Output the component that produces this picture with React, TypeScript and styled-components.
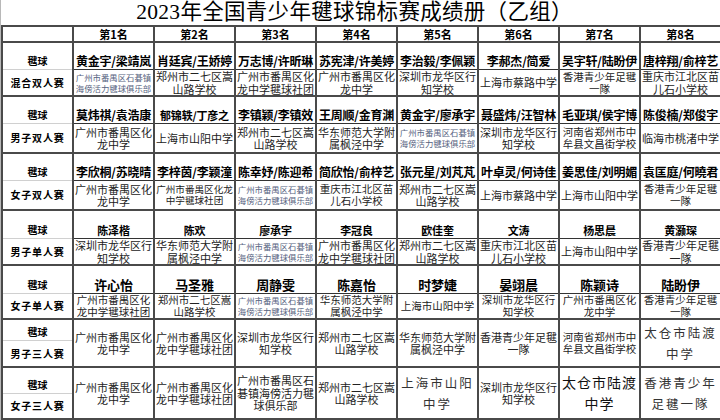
import React from "react";
import styled, { createGlobalStyle } from "styled-components";

const Global = createGlobalStyle`
  html, body { margin: 0; padding: 0; background: #fff; }
  body { font-family: "Noto Sans CJK SC", "Noto Sans", sans-serif; color: #000; }
`;

const Page = styled.div`
  width: 720px;
  height: 420px;
  overflow: hidden;
  box-sizing: border-box;
  border-left: 1px solid #b8b8b8;
`;

const Title = styled.h1`
  margin: 0;
  height: 25px;
  line-height: 25px;
  padding-right: 12px;
  text-align: center;
  font-family: "Liberation Serif", "Noto Sans CJK SC", serif;
  font-weight: 400;
  font-size: 21.5px;
  letter-spacing: 0.3px;
  color: #000;
`;

const Table = styled.div`
  display: grid;
  grid-template-columns: 71px repeat(8, 81px);
  border-top: 2px solid #4a4a4a;
  border-left: 2px solid #4a4a4a;
  width: 720px;
  box-sizing: border-box;
`;

const Cell = styled.div<{ $h: number }>`
  height: ${(p) => p.$h}px;
  box-sizing: border-box;
  border-right: 2px solid #4a4a4a;
  border-bottom: 2px solid #4a4a4a;
  display: flex;
  flex-direction: column;
  overflow: hidden;
`;

const HeadCell = styled(Cell)`
  align-items: center;
  justify-content: center;
  font-weight: 700;
  font-size: 11px;
  line-height: 12px;
`;

const LabelTop = styled.div<{ $h: number }>`
  height: ${(p) => p.$h}px;
  box-sizing: border-box;
  border-bottom: 1px solid #d0d0d0;
  display: flex;
  align-items: flex-end;
  justify-content: center;
  padding-bottom: 2px;
  font-weight: 700;
  font-size: 10px;
  line-height: 12px;
`;

const LabelBottom = styled.div`
  flex: 1;
  display: flex;
  align-items: center;
  justify-content: center;
  font-weight: 700;
  font-size: 10px;
  letter-spacing: 0.8px;
  line-height: 12px;
`;

const NamePart = styled.div<{ $h: number; $size: number }>`
  height: ${(p) => p.$h}px;
  flex: none;
  box-sizing: border-box;
  border-bottom: 1px solid #333;
  display: flex;
  align-items: flex-end;
  justify-content: center;
  padding-bottom: 1px;
  font-weight: 700;
  font-size: ${(p) => p.$size}px;
  line-height: ${(p) => p.$size + 2}px;
  white-space: nowrap;
  letter-spacing: -0.2px;
`;

type Size = "tiny" | "xs" | "sm" | "md" | "lg" | "xl";

const sizes: Record<Size, { fs: number; lh: number; ls: number; color: string }> = {
  tiny: { fs: 8.4, lh: 11, ls: 0, color: "#56627e" },
  xs: { fs: 9.6, lh: 11.5, ls: 0, color: "#222" },
  sm: { fs: 10.5, lh: 11.8, ls: 0, color: "#222" },
  md: { fs: 11, lh: 12.5, ls: 0, color: "#222" },
  lg: { fs: 12.5, lh: 21, ls: 2, color: "#333" },
  xl: { fs: 14, lh: 21, ls: 1, color: "#111" },
};

const SchoolPart = styled.div<{ $size: Size }>`
  flex: 1;
  min-height: 0;
  display: flex;
  align-items: center;
  justify-content: center;
  text-align: center;
  padding: 0 1px;
  font-size: ${(p) => sizes[p.$size].fs}px;
  line-height: ${(p) => sizes[p.$size].lh}px;
  letter-spacing: ${(p) => sizes[p.$size].ls}px;
  color: ${(p) => sizes[p.$size].color};
`;

type Entry = { name?: string; school: string; size?: Size; nameSize?: number };
type Row = { event: string; h: number; nameH: number; split: number; nameSize: number; entries: Entry[] };

const TINY = "广州市番禺区石碁镇海傍活力毽球俱乐部";

const rows: Row[] = [
  {
    event: "混合双人赛", h: 54, nameH: 27, split: 27, nameSize: 12,
    entries: [
      { name: "黄金宇/梁靖岚", school: TINY, size: "tiny" },
      { name: "肖廷宾/王娇婷", school: "郑州市二七区嵩山路学校" },
      { name: "万志博/许昕琳", school: "广州市番禺区化龙中学毽球社团" },
      { name: "苏宪津/许美婷", school: "广州市番禺区化龙中学" },
      { name: "李治毅/李佩颖", school: "深圳市龙华区行知学校" },
      { name: "李郝杰/简爱", school: "上海市蔡路中学" },
      { name: "吴宇轩/陆盼伊", school: "香港青少年足毽一隊", size: "sm" },
      { name: "唐梓翔/俞梓艺", school: "重庆市江北区苗儿石小学校" },
    ],
  },
  {
    event: "男子双人赛", h: 57, nameH: 27, split: 27, nameSize: 12,
    entries: [
      { name: "莫炜祺/袁浩康", school: "广州市番禺区化龙中学" },
      { name: "郁锦轶/丁彦之", school: "上海市山阳中学", nameSize: 11 },
      { name: "李镇颖/李镇效", school: "郑州市二七区嵩山路学校" },
      { name: "王周顺/金育渊", school: "华东师范大学附属枫泾中学" },
      { name: "黄金宇/廖承宇", school: TINY, size: "tiny" },
      { name: "聂盛炜/汪智林", school: "深圳市龙华区行知学校" },
      { name: "毛亚琪/侯宇博", school: "河南省郑州市中牟县文昌街学校", size: "sm" },
      { name: "陈俊楠/郑俊宇", school: "临海市桃渚中学" },
    ],
  },
  {
    event: "女子双人赛", h: 57, nameH: 27, split: 27, nameSize: 12,
    entries: [
      { name: "李欣桐/苏晓晴", school: "广州市番禺区化龙中学" },
      { name: "李梓茵/李颖潼", school: "广州市番禺区化龙中学毽球社团", size: "xs" },
      { name: "陈幸妤/陈迎希", school: TINY, size: "tiny" },
      { name: "简欣怡/俞梓艺", school: "重庆市江北区苗儿石小学校", size: "sm" },
      { name: "张元星/刘芃芃", school: "郑州市二七区嵩山路学校" },
      { name: "叶卓灵/何诗佳", school: "上海市蔡路中学" },
      { name: "姜思佳/刘明媚", school: "上海市山阳中学" },
      { name: "袁匡庭/何曉君", school: "香港青少年足毽一隊", size: "sm" },
    ],
  },
  {
    event: "男子单人赛", h: 55, nameH: 28, split: 28, nameSize: 11,
    entries: [
      { name: "陈泽楷", school: "深圳市龙华区行知学校" },
      { name: "陈欢", school: "华东师范大学附属枫泾中学" },
      { name: "廖承宇", school: TINY, size: "tiny" },
      { name: "李冠良", school: "广州市番禺区化龙中学毽球社团" },
      { name: "欧佳奎", school: "郑州市二七区嵩山路学校" },
      { name: "文涛", school: "重庆市江北区苗儿石小学校" },
      { name: "杨思晨", school: "上海市山阳中学" },
      { name: "黄灏琛", school: "香港青少年足毽一隊" },
    ],
  },
  {
    event: "女子单人赛", h: 54, nameH: 28, split: 28, nameSize: 13,
    entries: [
      { name: "许心怡", school: "广州市番禺区化龙中学毽球社团", size: "sm" },
      { name: "马圣雅", school: "郑州市二七区嵩山路学校", size: "sm" },
      { name: "周静雯", school: TINY, size: "tiny" },
      { name: "陈嘉怡", school: "华东师范大学附属枫泾中学", size: "sm" },
      { name: "时梦婕", school: "上海市山阳中学", size: "sm" },
      { name: "晏翊晨", school: "深圳市龙华区行知学校", size: "sm" },
      { name: "陈颖诗", school: "广州市番禺区化龙中学", size: "sm" },
      { name: "陆盼伊", school: "香港青少年足毽一隊", size: "sm" },
    ],
  },
  {
    event: "男子三人赛", h: 48, nameH: 0, split: 21, nameSize: 12,
    entries: [
      { school: "广州市番禺区化龙中学" },
      { school: "广州市番禺区化龙中学毽球社团" },
      { school: "深圳市龙华区行知学校" },
      { school: "郑州市二七区嵩山路学校" },
      { school: "华东师范大学附属枫泾中学" },
      { school: "香港青少年足毽一隊" },
      { school: "河南省郑州市中牟县文昌街学校", size: "sm" },
      { school: "太仓市陆渡中学", size: "lg" },
    ],
  },
  {
    event: "女子三人赛", h: 52, nameH: 0, split: 26, nameSize: 12,
    entries: [
      { school: "广州市番禺区化龙中学" },
      { school: "广州市番禺区化龙中学毽球社团" },
      { school: "广州市番禺区石碁镇海傍活力毽球俱乐部" },
      { school: "郑州市二七区嵩山路学校" },
      { school: "上海市山阳中学", size: "lg" },
      { school: "深圳市龙华区行知学校" },
      { school: "太仓市陆渡中学", size: "xl" },
      { school: "香港青少年足毽一隊", size: "lg" },
    ],
  },
];

const ranks = ["第1名", "第2名", "第3名", "第4名", "第5名", "第6名", "第7名", "第8名"];

export default function App() {
  return (
    <>
      <Global />
      <Page>
        <Title>2023年全国青少年毽球锦标赛成绩册（乙组）</Title>
        <Table>
          <HeadCell $h={16} />
          {ranks.map((r) => (
            <HeadCell key={r} $h={16}>{r}</HeadCell>
          ))}
          {rows.map((row) => (
            <React.Fragment key={row.event}>
              <Cell $h={row.h}>
                <LabelTop $h={row.split}>毽球</LabelTop>
                <LabelBottom>{row.event}</LabelBottom>
              </Cell>
              {row.entries.map((e, i) => (
                <Cell key={i} $h={row.h}>
                  {e.name && (
                    <NamePart $h={row.nameH} $size={e.nameSize ?? row.nameSize}>
                      {e.name}
                    </NamePart>
                  )}
                  <SchoolPart $size={e.size ?? "md"}>{e.school}</SchoolPart>
                </Cell>
              ))}
            </React.Fragment>
          ))}
        </Table>
      </Page>
    </>
  );
}
